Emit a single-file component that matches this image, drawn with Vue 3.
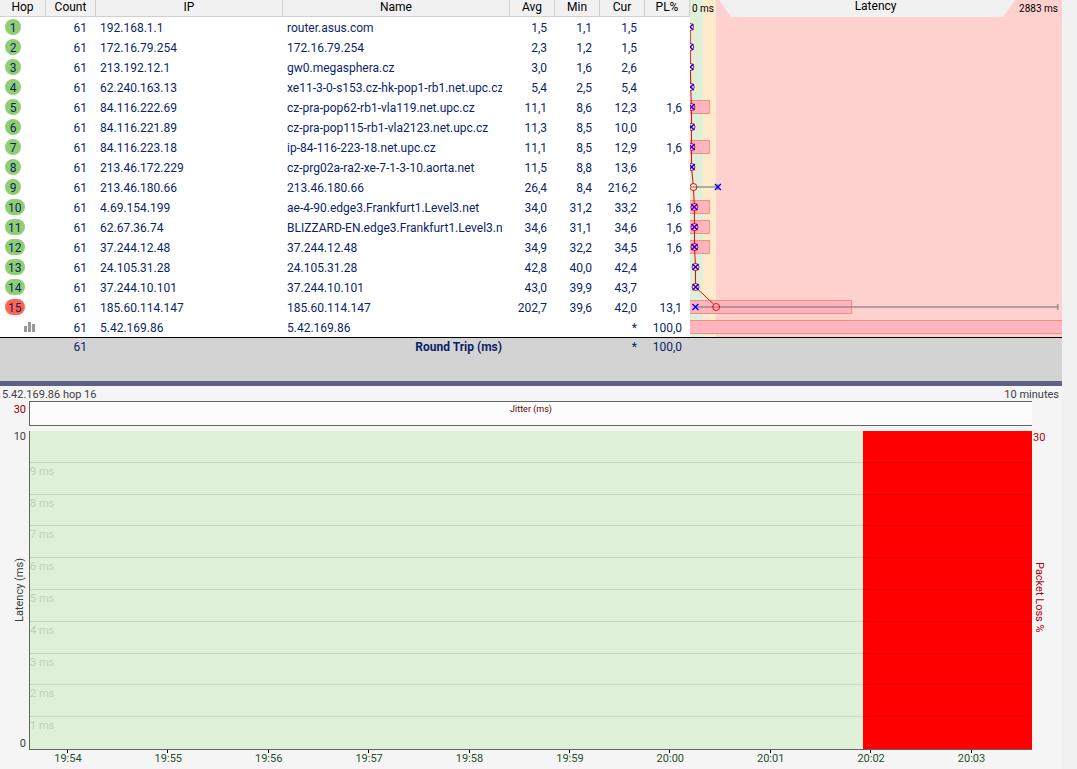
<script setup>
const SCALE_MS = 2883
const LOSS_SCALE = 30
const SAMPLES = 61

const hops = [
  { hop: 1, ip: '192.168.1.1', name: 'router.asus.com', avg: '1,5', min: '1,1', cur: '1,5' },
  { hop: 2, ip: '172.16.79.254', name: '172.16.79.254', avg: '2,3', min: '1,2', cur: '1,5' },
  { hop: 3, ip: '213.192.12.1', name: 'gw0.megasphera.cz', avg: '3,0', min: '1,6', cur: '2,6' },
  { hop: 4, ip: '62.240.163.13', name: 'xe11-3-0-s153.cz-hk-pop1-rb1.net.upc.cz', avg: '5,4', min: '2,5', cur: '5,4' },
  { hop: 5, ip: '84.116.222.69', name: 'cz-pra-pop62-rb1-vla119.net.upc.cz', avg: '11,1', min: '8,6', cur: '12,3', loss: '1,6' },
  { hop: 6, ip: '84.116.221.89', name: 'cz-pra-pop115-rb1-vla2123.net.upc.cz', avg: '11,3', min: '8,5', cur: '10,0' },
  { hop: 7, ip: '84.116.223.18', name: 'ip-84-116-223-18.net.upc.cz', avg: '11,1', min: '8,5', cur: '12,9', loss: '1,6' },
  { hop: 8, ip: '213.46.172.229', name: 'cz-prg02a-ra2-xe-7-1-3-10.aorta.net', avg: '11,5', min: '8,8', cur: '13,6' },
  { hop: 9, ip: '213.46.180.66', name: '213.46.180.66', avg: '26,4', min: '8,4', cur: '216,2', max: 216 },
  { hop: 10, ip: '4.69.154.199', name: 'ae-4-90.edge3.Frankfurt1.Level3.net', avg: '34,0', min: '31,2', cur: '33,2', loss: '1,6' },
  { hop: 11, ip: '62.67.36.74', name: 'BLIZZARD-EN.edge3.Frankfurt1.Level3.net', avg: '34,6', min: '31,1', cur: '34,6', loss: '1,6' },
  { hop: 12, ip: '37.244.12.48', name: '37.244.12.48', avg: '34,9', min: '32,2', cur: '34,5', loss: '1,6' },
  { hop: 13, ip: '24.105.31.28', name: '24.105.31.28', avg: '42,8', min: '40,0', cur: '42,4' },
  { hop: 14, ip: '37.244.10.101', name: '37.244.10.101', avg: '43,0', min: '39,9', cur: '43,7' },
  { hop: 15, ip: '185.60.114.147', name: '185.60.114.147', avg: '202,7', min: '39,6', cur: '42,0', loss: '13,1', max: 2850, bad: true },
  { hop: 16, ip: '5.42.169.86', name: '5.42.169.86', avg: '', min: '', cur: '*', loss: '100,0', target: true }
]

const num = (s) => Number.parseFloat(String(s).replace(',', '.'))
const pct = (ms) => `${(ms / SCALE_MS) * 100}%`
const rowY = (i) => i * 20 + 10

// Loss is shown rounded to one decimal; recover the exact share from the lost packet count.
const exactLoss = (s) => (Math.round((num(s) / 100) * SAMPLES) / SAMPLES) * 100

const lossBars = hops
  .map((h, i) => ({ y: rowY(i) - 7, loss: h.loss ? exactLoss(h.loss) : 0 }))
  .filter((b) => b.loss > 0)
  .map((b) => ({ y: b.y, width: b.loss >= LOSS_SCALE ? '102%' : `${(b.loss / LOSS_SCALE) * 100}%` }))

const points = hops
  .map((h, i) => ({ y: rowY(i), avg: num(h.avg), cur: num(h.cur), min: num(h.min), max: h.max }))
  .filter((p) => !Number.isNaN(p.avg))

const ranges = points.filter((p) => p.max)

const segments = points.slice(1).map((p, i) => {
  const from = points[i]
  const d = p.avg - from.avg
  return {
    x1: pct(from.avg + d * 0.15),
    x2: pct(p.avg - d * 0.13),
    y1: from.y + 3,
    y2: p.y - 3
  }
})

const gridLabels = ['', '9 ms', '8 ms', '7 ms', '6 ms', '5 ms', '4 ms', '3 ms', '2 ms', '1 ms']
const times = ['19:54', '19:55', '19:56', '19:57', '19:58', '19:59', '20:00', '20:01', '20:02', '20:03'].map(
  (label, i) => ({ label, left: `${3.88 + i * 10.01}%` })
)
const outage = { left: '83.13%' }
</script>

<template>
  <main class="app">
    <table class="trace">
      <colgroup>
        <col class="c-hop" />
        <col class="c-count" />
        <col class="c-ip" />
        <col class="c-name" />
        <col class="c-num" />
        <col class="c-num" />
        <col class="c-num" />
        <col class="c-num" />
        <col />
      </colgroup>
      <thead>
        <tr>
          <th scope="col">Hop</th>
          <th scope="col">Count</th>
          <th scope="col">IP</th>
          <th scope="col">Name</th>
          <th scope="col">Avg</th>
          <th scope="col">Min</th>
          <th scope="col">Cur</th>
          <th scope="col">PL%</th>
          <th scope="col" class="lat-head bands">
            <div class="lat-row">
              <span class="scale">0 ms</span>
              <span class="tab">Latency</span>
              <span class="scale">2883 ms</span>
            </div>
          </th>
        </tr>
      </thead>
      <tbody>
        <tr v-for="(h, i) in hops" :key="h.hop">
          <td class="hop">
            <svg v-if="h.target" class="bars" width="11" height="10" viewBox="0 0 11 10" role="img" aria-label="Graphed hop">
              <path d="M0 4h3v6H0zM4 0h3v10H4zM8 2h3v8H8z" fill="#999" />
            </svg>
            <span v-else class="badge" :class="{ bad: h.bad }">{{ h.hop }}</span>
          </td>
          <td class="count">61</td>
          <td class="text">{{ h.ip }}</td>
          <td class="text"><div class="clip">{{ h.name }}</div></td>
          <td class="num">{{ h.avg }}</td>
          <td class="num">{{ h.min }}</td>
          <td class="num">{{ h.cur }}</td>
          <td class="num">{{ h.loss }}</td>
          <td v-if="i === 0" class="graph bands" :rowspan="hops.length">
            <svg class="graph-svg" role="img" aria-label="Latency by hop">
              <rect v-for="b in lossBars" :key="'b' + b.y" class="loss" x="-1" :y="b.y + 0.5" height="13" :width="b.width" />
              <g v-for="r in ranges" :key="'r' + r.y" class="range">
                <line :x1="pct(r.min)" :x2="pct(r.max)" :y1="r.y" :y2="r.y" />
                <line :x1="pct(r.max)" :x2="pct(r.max)" :y1="r.y - 3" :y2="r.y + 3" />
              </g>
              <line v-for="s in segments" :key="'s' + s.y1" class="avg" :x1="s.x1" :x2="s.x2" :y1="s.y1" :y2="s.y2" />
              <circle v-for="p in points" :key="'c' + p.y" class="avg" :cx="pct(p.avg)" :cy="p.y" r="3.5" />
              <svg v-for="p in points" :key="'x' + p.y" :x="pct(p.cur)" :y="p.y" class="mark">
                <path d="M-3 -3L3 3M3 -3L-3 3" />
              </svg>
            </svg>
          </td>
        </tr>
      </tbody>
      <tfoot>
        <tr>
          <td></td>
          <td class="count">61</td>
          <td></td>
          <td class="num total">Round Trip (ms)</td>
          <td></td>
          <td></td>
          <td class="num">*</td>
          <td class="num">100,0</td>
          <td></td>
        </tr>
      </tfoot>
    </table>

    <section class="timeline">
      <header class="caption">
        <span>5.42.169.86 hop 16</span>
        <span>10 minutes</span>
      </header>
      <div class="jitter-axis">30</div>
      <div class="jitter">Jitter (ms)</div>
      <div class="left-axis">
        <span>10</span>
        <span class="vertical up">Latency (ms)</span>
        <span>0</span>
      </div>
      <div class="plot">
        <div class="outage" :style="outage"></div>
        <div v-for="(g, i) in gridLabels" :key="i" class="band">{{ g }}</div>
      </div>
      <div class="right-axis">
        <span>30</span>
        <span class="vertical down">Packet Loss %</span>
      </div>
      <div class="times">
        <span v-for="t in times" :key="t.label" class="time" :style="{ left: t.left }">{{ t.label }}</span>
      </div>
    </section>
  </main>
</template>

<style>
body {
  margin: 0;
  background: #f1f1f1;
}
</style>

<style scoped>
.app {
  box-sizing: border-box;
  display: flex;
  flex-direction: column;
  min-height: 100vh;
  margin-right: 15px;
  font-family: Roboto, "Liberation Sans", sans-serif;
  font-size: 12px;
  color: #0b1f6b;
}

.trace {
  width: 100%;
  table-layout: fixed;
  border-collapse: separate;
  border-spacing: 0;
  background: #fff;
}

.c-hop { width: 46px; }
.c-count { width: 50px; }
.c-ip { width: 187px; }
.c-name { width: 227px; }
.c-num { width: 45px; }

th {
  height: 16px;
  padding: 0;
  vertical-align: top;
  line-height: 14px;
  font-weight: 400;
  color: #000;
  background: #f1f1f1;
  border-right: 1px solid #d0d0d0;
  border-bottom: 1px solid #d0d0d0;
}

.bands {
  background: linear-gradient(
    to right,
    #dff0d8 0 3.47%,
    #ffeacb 3.47% 6.94%,
    #ffd1ce 6.94%
  );
}

.lat-head {
  height: 17px;
  border: 0;
}

.lat-row {
  display: flex;
  height: 17px;
  padding: 0 4px 0 2px;
}

.scale {
  font-size: 10px;
  line-height: 18px;
  white-space: nowrap;
}

.tab {
  flex: 1;
  margin: 0 4px 0 5px;
  padding-left: 17px;
  line-height: 13px;
  background: #f1f1f1;
  clip-path: polygon(0 0, 100% 0, calc(100% - 12px) 100%, 12px 100%);
}

td {
  box-sizing: border-box;
  height: 20px;
  padding: 2px 0 0;
  line-height: 18px;
  white-space: nowrap;
}

td.graph {
  padding: 0;
}

td.hop {
  padding: 0 0 0 5px;
}

.badge {
  display: block;
  box-sizing: border-box;
  width: fit-content;
  min-width: 16px;
  height: 16px;
  padding: 0 3px;
  border-radius: 8px;
  line-height: 18px;
  text-align: center;
  background: #90ce72;
}

.badge.bad {
  background: #ff6450;
}

.bars {
  display: block;
  margin-left: 19px;
}

td.count {
  padding-right: 9px;
  text-align: right;
}

td.text {
  padding-right: 8px;
  padding-left: 4px;
}

.clip {
  overflow: hidden;
}

td.num {
  padding-right: 8px;
  text-align: right;
}

.graph-svg {
  display: block;
  width: 100%;
  height: 320px;
  overflow: hidden;
}

.loss {
  fill: #ffb4c0;
  stroke: #e8957c;
}

.range line {
  stroke: rgba(110, 110, 110, 0.5);
  stroke-width: 2;
}

.avg {
  fill: none;
  stroke: #f00;
}

.mark {
  overflow: visible;
  stroke: #00f;
  stroke-width: 1.3;
}

tfoot td {
  height: 44px;
  padding-top: 0;
  vertical-align: top;
  background: #d3d3d3;
  border-top: 1px solid #000;
}

.total {
  font-weight: 700;
}

.timeline {
  flex: 1;
  display: grid;
  grid-template-columns: 29px 1fr 30px;
  grid-template-rows: 15px 25px minmax(200px, 1fr) 19px;
  border-top: 5px solid #5f5f87;
  background: #f5f5f5;
  font-size: 11px;
  line-height: 13px;
  color: #404040;
}

.caption {
  grid-column: 1 / -1;
  display: flex;
  justify-content: space-between;
  padding: 2px 3px 0 2px;
}

.jitter-axis {
  padding: 2px 3px 0 0;
  text-align: right;
  color: #8b0000;
}

.jitter {
  padding-top: 1px;
  border: 1px solid #646464;
  border-right: 0;
  background: #fcfcfc;
  font-size: 9px;
  text-align: center;
  color: #600000;
}

.plot,
.right-axis {
  margin-top: 5px;
}

.left-axis {
  grid-column: 1;
  display: flex;
  flex-direction: column;
  justify-content: space-between;
  align-items: flex-end;
  margin-top: 4px;
  padding-right: 3px;
}

.vertical {
  writing-mode: vertical-rl;
}

.up {
  transform: rotate(180deg);
}

.down {
  margin: auto 0;
}

.plot {
  position: relative;
  display: flex;
  flex-direction: column;
  padding-bottom: 1px;
  border-left: 1px solid #646464;
  border-bottom: 1px solid #646464;
  background: #dff0d8;
}

.outage {
  position: absolute;
  top: 0;
  right: 0;
  bottom: 0;
  background: #f00;
}

.band {
  position: relative;
  flex: 1;
  line-height: 17px;
  color: #c3cfbd;
}

.band + .band {
  border-top: 1px solid rgba(0, 0, 0, 0.1);
}

.right-axis {
  display: flex;
  flex-direction: column;
  align-items: flex-start;
  padding-left: 1px;
  color: #b00010;
}

.times {
  grid-column: 2;
  position: relative;
  color: #24502c;
}

.time {
  position: absolute;
  top: 0;
  width: 40px;
  margin-left: -20px;
  padding-top: 2px;
  text-align: center;
}

.time::before {
  content: "";
  position: absolute;
  top: 0;
  left: 19px;
  width: 1px;
  height: 3px;
  background: #000;
}
</style>
